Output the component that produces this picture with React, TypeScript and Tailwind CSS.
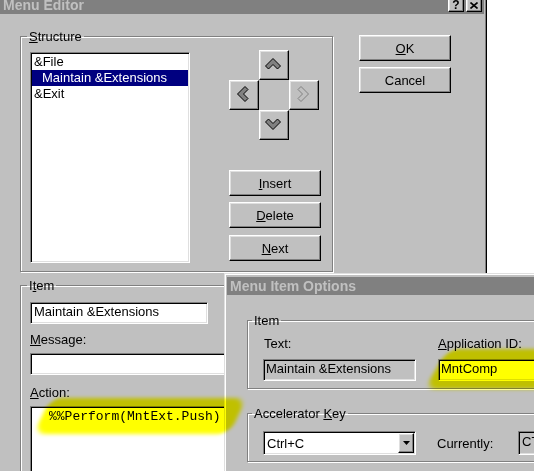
import React from 'react';

const raised =
  'border border-t-white border-l-white border-r-black border-b-black shadow-[inset_-1px_-1px_#808080,inset_1px_1px_#dfdfdf]';
const sunken =
  'border border-t-[#808080] border-l-[#808080] border-r-white border-b-white shadow-[inset_1px_1px_#000,inset_-1px_-1px_#dfdfdf]';
const etched = 'border border-[#808080] shadow-[inset_1px_1px_#fff,1px_1px_#fff]';

function Chevron({ className = '', disabled = false }: { className?: string; disabled?: boolean }) {
  return (
    <svg width="16" height="12" viewBox="0 0 16 12" className={className}>
      <polygon
        points="8,0.5 15.5,8 12.5,11 8,6.5 3.5,11 0.5,8"
        fill={disabled ? '#c0c0c0' : '#808080'}
        stroke={disabled ? '#808080' : '#000'}
        strokeWidth="1"
      />
    </svg>
  );
}

function Btn({ children, className = '' }: { children: React.ReactNode; className?: string }) {
  return (
    <button type="button" className={`flex items-center justify-center bg-[#c0c0c0] ${raised} ${className}`}>
      {children}
    </button>
  );
}

export default function App() {
  return (
    <div className="relative w-[534px] h-[471px] overflow-hidden bg-white font-['Liberation_Sans',Arial,sans-serif] text-[13px] leading-[15px] text-black select-none">
      {/* Menu Editor window */}
      <div className="-ml-[4px] -mt-[4px] w-[491px] h-[480px] bg-[#c0c0c0] border-r border-r-black shadow-[inset_-1px_0_#808080] pl-[3px] pr-[2px]">
        <div className="h-[18px] bg-[#808080] flex items-center justify-between pl-[4px] pr-[2px]">
          <span className="font-bold text-[14px] text-[#c0c0c0]">Menu Editor</span>
          <div className="flex gap-[2px]">
            <Btn className="w-[16px] h-[14px] font-bold text-[12px] leading-none">?</Btn>
            <Btn className="w-[16px] h-[14px]">
              <svg width="8" height="7" viewBox="0 0 8 7">
                <path d="M0.5 0.5 L7.5 6.5 M7.5 0.5 L0.5 6.5" stroke="#000" strokeWidth="1.6" />
              </svg>
            </Btn>
          </div>
        </div>

        <div className="flex">
          <div className="ml-[21px] w-[313px] flex flex-col">
            {/* Structure */}
            <fieldset className={`mt-[15px] ${etched}`}>
              <legend className="ml-[6px] px-[2px] leading-[15px]">
                <u>S</u>tructure
              </legend>
              <div className="flex pl-[9px] pt-[6px] pb-[8px]">
                <div className={`mt-[2px] w-[160px] h-[211px] bg-white p-[1px] ${sunken}`}>
                  <div className="h-[16px] leading-[16px] pl-[2px]">{'&File'}</div>
                  <div className="h-[16px] leading-[16px] pl-[10px] bg-[#000080] text-white">
                    {'Maintain &Extensions'}
                  </div>
                  <div className="h-[16px] leading-[16px] pl-[2px]">{'&Exit'}</div>
                </div>
                <div className="ml-[39px] flex flex-col">
                  <div className="grid grid-cols-[30px_30px_30px] grid-rows-[30px_30px_30px]">
                    <Btn className="col-start-2 row-start-1 pr-[2px] pb-[2px]">
                      <Chevron />
                    </Btn>
                    <Btn className="col-start-1 row-start-2 pr-[2px] pb-[2px]">
                      <Chevron className="-rotate-90" />
                    </Btn>
                    <Btn className="col-start-3 row-start-2 pr-[2px] pb-[2px]">
                      <Chevron className="rotate-90" disabled />
                    </Btn>
                    <Btn className="col-start-2 row-start-3 pr-[2px] pb-[2px]">
                      <Chevron className="rotate-180" />
                    </Btn>
                  </div>
                  <Btn className="mt-[30px] w-[92px] h-[26px]">
                    <span>
                      <u>I</u>nsert
                    </span>
                  </Btn>
                  <Btn className="mt-[6px] w-[92px] h-[26px]">
                    <span>
                      <u>D</u>elete
                    </span>
                  </Btn>
                  <Btn className="mt-[7px] w-[92px] h-[26px]">
                    <span>
                      <u>N</u>ext
                    </span>
                  </Btn>
                </div>
              </div>
            </fieldset>

            {/* Item */}
            <fieldset className={`mt-[6px] ${etched}`}>
              <legend className="ml-[6px] px-[2px] leading-[15px]">
                I<u>t</u>em
              </legend>
              <div className="flex flex-col pl-[9px] pt-[9px]">
                <div className={`w-[178px] h-[22px] bg-white pl-[3px] leading-[18px] ${sunken}`}>
                  {'Maintain &Extensions'}
                </div>
                <div className="mt-[8px]">
                  <u>M</u>essage:
                </div>
                <div className={`mt-[6px] w-[290px] h-[22px] bg-white ${sunken}`} />
                <div className="mt-[10px]">
                  <u>A</u>ction:
                </div>
                <div
                  className={`mt-[6px] w-[290px] h-[80px] bg-white pl-[18px] pt-[2px] font-['Liberation_Mono',monospace] text-[13px] ${sunken}`}
                >
                  %%Perform(MntExt.Push)
                </div>
              </div>
            </fieldset>
          </div>

          <div className="ml-[26px] mt-[21px] flex flex-col gap-[6px]">
            <Btn className="w-[92px] h-[26px]">
              <span>
                <u>O</u>K
              </span>
            </Btn>
            <Btn className="w-[92px] h-[26px]">Cancel</Btn>
          </div>
        </div>
      </div>

      {/* Menu Item Options window */}
      <div className="absolute left-[224px] top-[273px] w-[330px] h-[210px] bg-[#c0c0c0] border-t border-l border-[#dfdfdf]">
        <div className="h-full border-t border-l border-white pl-[1px] pt-[2px]">
          <div className="h-[18px] bg-[#808080] flex items-center pl-[3px]">
            <span className="font-bold text-[14px] text-[#c0c0c0]">Menu Item Options</span>
          </div>

          <fieldset className={`ml-[20px] mt-[18px] w-[320px] ${etched}`}>
            <legend className="ml-[4px] px-[2px] leading-[15px]">Item</legend>
            <div className="grid grid-cols-[153px_160px] gap-x-[22px] pl-[15px] pt-[8px] pb-[7px]">
              <div className="pl-[1px]">Text:</div>
              <div>
                <u>A</u>pplication ID:
              </div>
              <div className={`mt-[8px] h-[22px] bg-[#c0c0c0] pl-[2px] leading-[18px] ${sunken}`}>
                {'Maintain &Extensions'}
              </div>
              <div className={`mt-[8px] h-[22px] bg-white pl-[2px] leading-[18px] ${sunken}`}>MntComp</div>
            </div>
          </fieldset>

          <fieldset className={`ml-[20px] mt-[17px] w-[320px] ${etched}`}>
            <legend className="ml-[4px] px-[2px] leading-[15px]">
              Accelerator <u>K</u>ey
            </legend>
            <div className="flex items-center pl-[15px] pt-[10px] pb-[6px]">
              <div className={`w-[153px] h-[24px] bg-white flex items-center justify-between p-[1px] ${sunken}`}>
                <span className="pl-[2px]">Ctrl+C</span>
                <Btn className="w-[16px] h-[20px]">
                  <svg width="7" height="4" viewBox="0 0 7 4">
                    <polygon points="0,0 7,0 3.5,4" fill="#000" />
                  </svg>
                </Btn>
              </div>
              <div className="ml-[21px] w-[81px]">Currently:</div>
              <div className={`w-[100px] h-[24px] bg-[#c0c0c0] pl-[3px] leading-[20px] overflow-hidden ${sunken}`}>
                CTRL+C
              </div>
            </div>
          </fieldset>
        </div>
      </div>

      {/* highlighter marks */}
      <div className="absolute left-[42px] top-[398px] w-[196px] h-[36px] -skew-x-[25deg] rounded-[12px] bg-[#ffff00] blur-[2px] mix-blend-multiply" />
      <div className="absolute left-[436px] top-[349px] w-[140px] h-[40px] -skew-x-[30deg] rounded-[12px] bg-[#ffff00] blur-[2px] mix-blend-multiply" />
    </div>
  );
}
